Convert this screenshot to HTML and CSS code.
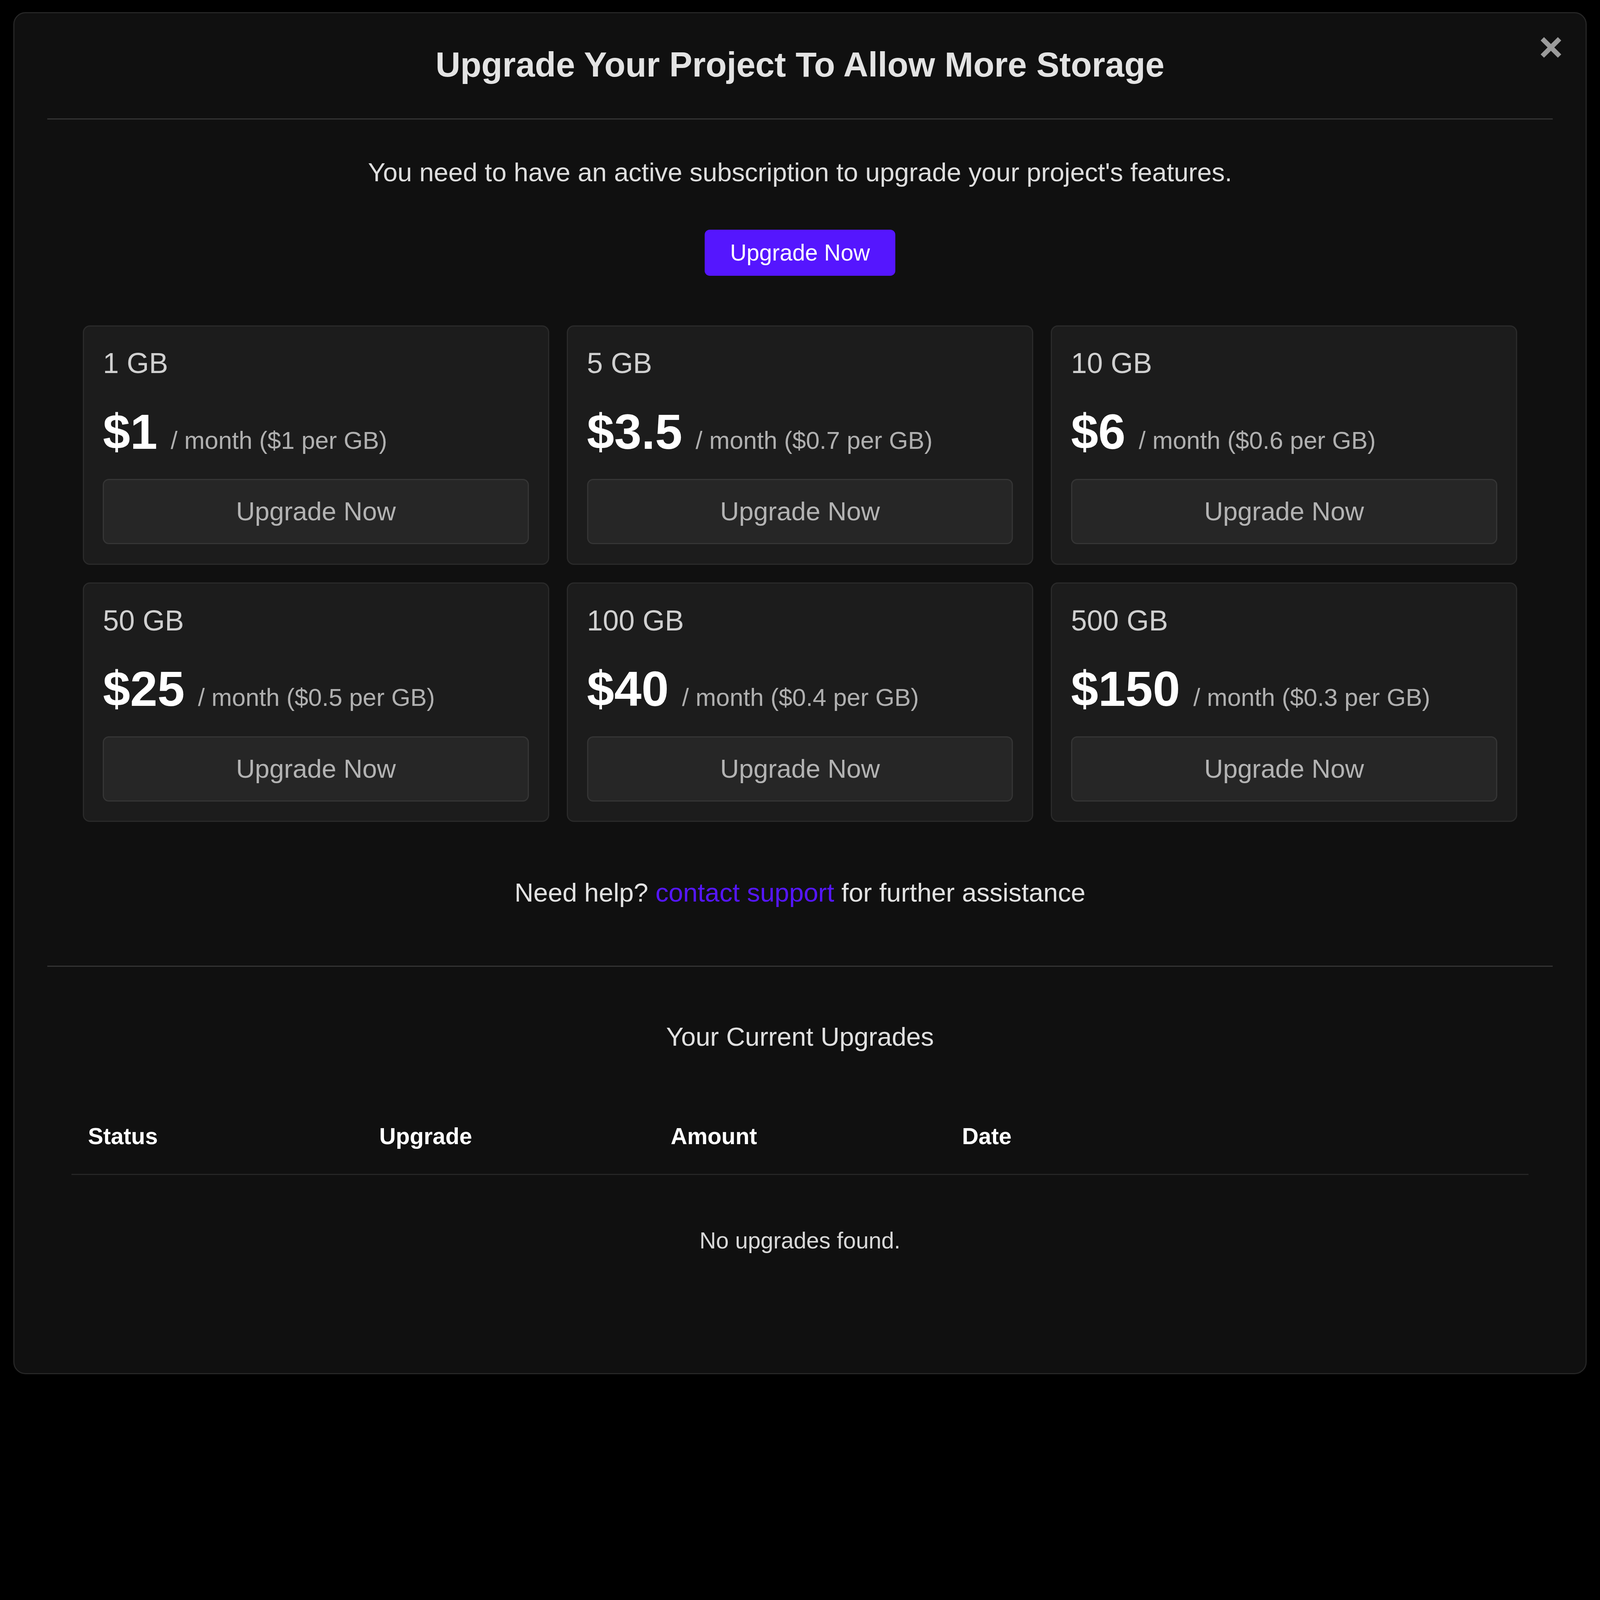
FILE: index.html
```html
<!DOCTYPE html>
<html lang="en">
<head>
  <meta charset="UTF-8" />
  <title>Upgrade Storage</title>
  <link rel="stylesheet" href="styles.css">
</head>
<body>
  <div class="modal">
    <!-- Cerrar -->
    <button class="modal-close" aria-label="Close">
      <svg width="22.5" height="22.5" viewBox="0 0 24 24">
        <path d="M3 3 L21 21 M21 3 L3 21" stroke="#9b9b9b" stroke-width="5" fill="none" />
      </svg>
    </button>

    <div class="modal-header">
      <h2 class="modal-title">Upgrade Your Project To Allow More Storage</h2>
    </div>

    <div class="modal-body">
      <p class="notice">You need to have an active subscription to upgrade your project's features.</p>
      <div class="notice-action">
        <button class="btn-primary">Upgrade Now</button>
      </div>

      <div class="plans">
        <div class="plan">
          <div class="plan-size">1 GB</div>
          <div class="plan-price"><span class="price">$1</span><span class="per">/ month ($1 per GB)</span></div>
          <button class="btn-plan">Upgrade Now</button>
        </div>
        <div class="plan">
          <div class="plan-size">5 GB</div>
          <div class="plan-price"><span class="price">$3.5</span><span class="per">/ month ($0.7 per GB)</span></div>
          <button class="btn-plan">Upgrade Now</button>
        </div>
        <div class="plan">
          <div class="plan-size">10 GB</div>
          <div class="plan-price"><span class="price">$6</span><span class="per">/ month ($0.6 per GB)</span></div>
          <button class="btn-plan">Upgrade Now</button>
        </div>
        <div class="plan">
          <div class="plan-size">50 GB</div>
          <div class="plan-price"><span class="price">$25</span><span class="per">/ month ($0.5 per GB)</span></div>
          <button class="btn-plan">Upgrade Now</button>
        </div>
        <div class="plan">
          <div class="plan-size">100 GB</div>
          <div class="plan-price"><span class="price">$40</span><span class="per">/ month ($0.4 per GB)</span></div>
          <button class="btn-plan">Upgrade Now</button>
        </div>
        <div class="plan">
          <div class="plan-size">500 GB</div>
          <div class="plan-price"><span class="price">$150</span><span class="per">/ month ($0.3 per GB)</span></div>
          <button class="btn-plan">Upgrade Now</button>
        </div>
      </div>

      <p class="help">Need help? <a href="#" class="help-link">contact support</a> for further assistance</p>
    </div>

    <div class="upgrades">
      <h3 class="upgrades-title">Your Current Upgrades</h3>
      <table class="upgrades-table">
        <thead>
          <tr>
            <th>Status</th>
            <th>Upgrade</th>
            <th>Amount</th>
            <th>Date</th>
            <th></th>
          </tr>
        </thead>
        <tbody>
          <tr>
            <td colspan="5" class="empty">No upgrades found.</td>
          </tr>
        </tbody>
      </table>
    </div>
  </div>
</body>
</html>
```

FILE: styles.css
```css
html {
  zoom: 2.614;
  background: #000;
}

body {
  margin: 0;
  background: #000;
  font-family: "Liberation Sans", Arial, Helvetica, sans-serif;
  line-height: 1.15;
  color: #e0e0e0;
}

.modal {
  position: relative;
  box-sizing: border-box;
  height: 1334px;
  margin: 12px 13px 0;
  padding: 0 32px;
  background: #101010;
  border: 1.5px solid #262626;
  border-radius: 12px;
}

.modal-close {
  position: absolute;
  top: 22px;
  right: 22.5px;
  width: 22.5px;
  height: 22.5px;
  padding: 0;
  border: none;
  background: none;
  cursor: pointer;
}

.modal-close svg {
  display: block;
}

.modal-header {
  padding: 31px 0 33.1px;
  border-bottom: 1.5px solid #343434;
  text-align: center;
}

.modal-title {
  margin: 0;
  font-size: 33.7px;
  font-weight: bold;
  color: #e3e3e3;
}

.modal-body {
  text-align: center;
}

.notice {
  margin: 36.9px 0 0;
  font-size: 25.6px;
  color: #dedede;
}

.notice-action {
  margin-top: 41.6px;
}

.btn-primary {
  font-family: inherit;
  font-size: 22.4px;
  line-height: 1.15;
  padding: 9.6px 24.7px;
  border: none;
  border-radius: 5px;
  background: #5516fe;
  color: #fff;
  cursor: pointer;
}

.plans {
  display: grid;
  grid-template-columns: repeat(3, 1fr);
  gap: 17.5px;
  margin: 48.5px 35px 0;
  text-align: left;
}

.plan {
  display: flex;
  flex-direction: column;
  padding: 20px 18.5px 19px;
  background: #1c1c1c;
  border: 1.5px solid #2a2a2a;
  border-radius: 7px;
}

.plan-size {
  font-size: 28px;
  color: #d0d0d0;
}

.plan-price {
  display: flex;
  align-items: baseline;
  gap: 13px;
  margin-top: 23.6px;
  white-space: nowrap;
}

.price {
  font-size: 48px;
  font-weight: bold;
  color: #fff;
}

.per {
  font-size: 24px;
  color: #b0b0b0;
}

.btn-plan {
  margin-top: 18.5px;
  font-family: inherit;
  font-size: 25.6px;
  line-height: 1.15;
  padding: 16px 0;
  background: #262626;
  border: 1.5px solid #353535;
  border-radius: 6px;
  color: #b3b3b3;
  cursor: pointer;
}

.help {
  margin: 54.5px 0 0;
  font-size: 25.6px;
  color: #e2e2e2;
}

.help-link {
  color: #5516fe;
  text-decoration: none;
}

.upgrades {
  margin-top: 56.8px;
  border-top: 1.5px solid #343434;
  text-align: center;
}

.upgrades-title {
  margin: 53.9px 0 0;
  font-size: 25.6px;
  font-weight: normal;
  color: #e0e0e0;
}

.upgrades-table {
  width: calc(100% - 48px);
  margin: 45.5px 24px 0;
  border-collapse: collapse;
  table-layout: fixed;
}

.upgrades-table th {
  padding: 24px 16px;
  font-size: 22.4px;
  font-weight: bold;
  text-align: left;
  color: #fff;
  border-bottom: 1.5px solid #262626;
}

.upgrades-table .empty {
  padding: 51.5px 16px 24px;
  font-size: 22.4px;
  text-align: center;
  color: #d8d8d8;
}
```
